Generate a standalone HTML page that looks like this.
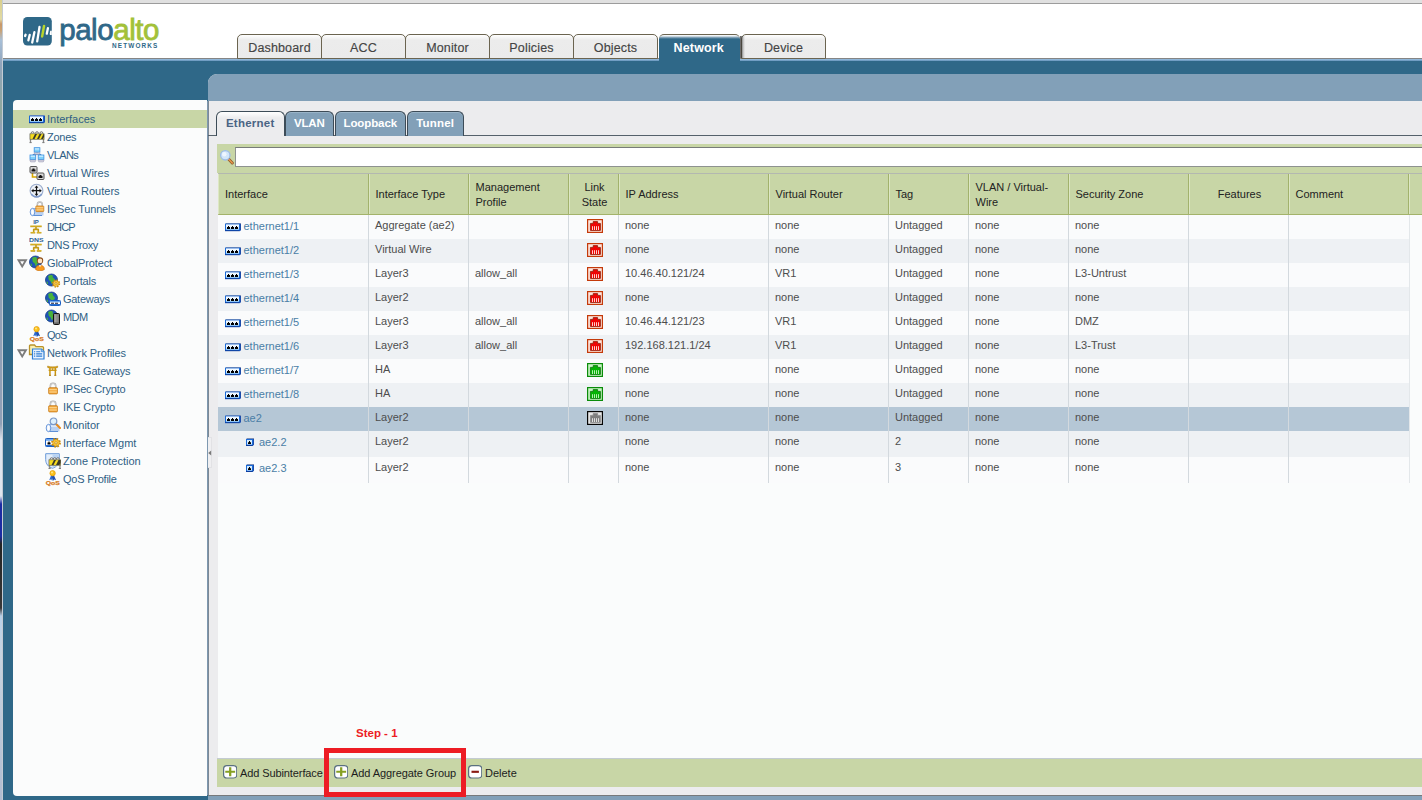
<!DOCTYPE html>
<html lang="en">
<head>
<meta charset="utf-8">
<title>Palo Alto Networks - Network - Interfaces</title>
<style>
*{box-sizing:border-box;margin:0;padding:0}
html,body{width:1422px;height:800px;overflow:hidden;background:#2f6888}
body{position:relative;font-family:"Liberation Sans",sans-serif;font-size:11px;color:#4a4a4a}
.abs{position:absolute}
#strip{left:0;top:0;width:3px;height:800px;border-right:1px solid #c3cbd4;background:linear-gradient(#d9cf8c 0,#e2daa4 2.4%,#c8986a 3%,#caa274 3.800%,#a8c0d8 5%,#90a4bc 8%,#8ea89c 14%,#8fa0b6 16%,#8fa0b6 53%,#dfe6ee 55%,#dfe6ee 62%,#1c2ca2 63%,#1c2ca2 67%,#242424 68%,#383838 76%,#b8d0e8 77%,#c8d4e0 82%,#b0bcd0 100%)}
#topbar{left:3px;top:0;width:1419px;height:4px;background:#e0e0e0;border-bottom:1px solid #9c9c9c}
#header{left:3px;top:4px;width:1419px;height:54px;background:#fff}
#hline{left:3px;top:58px;width:1419px;height:3px;background:linear-gradient(#858585 0,#858585 33%,#9cc2e4 34%,#6f9cc2 85%,#2f6888 100%)}
/* nav tabs */
.ntab{position:absolute;top:34px;height:25px;width:83.500px;border:1px solid #6b6450;border-bottom:1px solid #6b6450;border-radius:5px 5px 0 0;background:linear-gradient(#fff 0,#ececec 22%,#ebebeb 100%);text-align:center;font-size:12.5px;line-height:26px;color:#444;letter-spacing:.15px;-webkit-text-stroke:.15px #444}
.ntab.on{background:linear-gradient(#fff 0,#e6edf2 1px,#7fa0b6 2.500px,#2f6888 4px);color:#fff;font-weight:bold;border:0;border-top:1px solid #6b6450;height:27px;-webkit-text-stroke:0;letter-spacing:.15px;z-index:2}
/* panel */
#panel{left:208px;top:74px;width:1214px;height:721px;background:#ececee;border-radius:9px 0 0 0;overflow:hidden}
#ptitle{left:208px;top:74px;width:1214px;height:27px;background:#82a0b8;border-radius:9px 0 0 0}
#pleft{left:207px;top:101px;width:2px;height:694px;background:linear-gradient(to right,#7d9fbd,#7e8288)}
#phandle{left:208px;top:437px;width:4px;height:31px;background:#efeff1;border:1px solid #e2e2e5;border-left:0}
#pbot{left:208px;top:795px;width:1214px;height:5px;background:#82a0b8;border-top:1px solid #77797b}
#tabline{left:208px;top:134.500px;width:1214px;height:1px;background:#55616b}
.stab{position:absolute;top:111px;height:24.500px;border:1px solid #3d4c58;border-bottom:0;border-radius:6px 6px 0 0;background:#82a0b8;color:#fff;font-weight:bold;font-size:11.500px;line-height:22px;text-align:center;white-space:nowrap;box-shadow:inset 0 1px 0 #9ab4c8}
.stab.on{background:linear-gradient(#fff 0,#f6f6f7 3px,#ececee 6px);color:#4a6484;height:25px;box-shadow:none}
#sbar{left:217px;top:144px;width:1205px;height:29px;background:#c8d6a6}
#sinput{left:235px;top:147px;width:1190px;height:20px;background:#fff;border:1px solid #8e9290;border-top-color:#777b7a}
#ghead{left:217.500px;top:172.500px;width:1205px;height:42px;background:#c8d6a6;border-top:1px solid #b3b8b0;border-bottom:1px solid #a3b36a;border-left:1px solid #b9c49a}
.hc{position:absolute;top:173.500px;height:40.500px;border-left:1px solid #a2b26c;box-shadow:inset 1px 0 0 #dde7c4;color:#222;font-size:11px;line-height:15px;padding-left:7px;padding-top:1.500px;display:flex;align-items:center;white-space:nowrap}
.hc.ctr{justify-content:center;padding-left:3px;text-align:center}
#gbody{left:218px;top:214.500px;width:1204px;height:544px;background:#fafcfc}
.row{position:absolute;left:218px;width:1191.500px;height:24px}
.row.a{background:#fafbfc}.row.b{background:#eef1f4}.row.s{background:#b5c7d6}
.vl{position:absolute;top:214.500px;width:1px;height:268px;background:#d3d9de}
.c{position:absolute;height:24px;line-height:22px;white-space:nowrap;font-size:11px;color:#4d4d4d}
.lnk{color:#4a7ea6}
#bbar{left:217px;top:758px;width:1205px;height:29px;background:#c8d6a6;border-top:1px solid #c3cbd2}
.btxt{position:absolute;top:765px;height:16px;line-height:16px;font-size:11px;color:#1c1c1c;white-space:nowrap}
/* side */
#side{left:13px;top:100px;width:194px;height:696px;background:#fbfcfc;border-radius:4px 0 0 4px}
#side .sel{position:absolute;left:0;top:10px;width:194px;height:18px;background:#c8d6a6}
.ti{position:absolute;height:18px;line-height:18px;color:#2f5f85;white-space:nowrap;font-size:11px}
.ti svg{position:absolute;top:1px}
</style>
</head>
<body>
<div id="strip" class="abs"></div>
<div id="topbar" class="abs"></div>
<div id="header" class="abs"></div>
<div id="hline" class="abs"></div>

<!-- NAVTABS -->
<div class="ntab" style="left:237px;width:85px">Dashboard</div>
<div class="ntab" style="left:321px;width:85px">ACC</div>
<div class="ntab" style="left:405px;width:85px">Monitor</div>
<div class="ntab" style="left:489px;width:85px">Policies</div>
<div class="ntab" style="left:573px;width:85px">Objects</div>
<div class="ntab on" style="left:659px;width:81px;padding-right:1.500px">Network</div><div class="abs" style="left:740px;top:36px;width:5px;height:22px;z-index:3;background:linear-gradient(to right,rgba(40,40,40,.75),rgba(50,50,50,.5) 40%,rgba(60,60,60,.2) 70%,rgba(0,0,0,0))"></div>
<div class="ntab" style="left:741px;width:85px">Device</div>

<svg class="abs" style="left:23.150px;top:17.150px" width="29" height="29" viewBox="0 0 29 29"><rect x="0" y="0" width="28.800" height="28.400" rx="4.300" fill="#2f6888"/><g stroke="#fff" stroke-width="2.300" stroke-linecap="round"><path d="M2.600 17.700l-.5 1.300"/><path d="M6.750 17.900l-1.350 5.400"/><path d="M11.400 15.200l-2.200 10.300"/><path d="M16.500 10l-2.300 14.400"/><path d="M24.900 11.200l-1.100 5.500"/></g><path d="M21.050 8.900l-1.900 10.500" stroke="#b9d42c" stroke-width="2.500" stroke-linecap="round"/><path d="M27.300 13.700h1.500v4.300h-1.500a1 1 0 0 1-.6-1.200l.4-2.300a1 1 0 0 1 .2-.8z" fill="#fff"/></svg><div class="abs" id="logotxt" style="left:59.200px;top:9.700px;height:40px;line-height:40px;font-size:29.500px;letter-spacing:-.45px;white-space:nowrap;color:#2f6888;-webkit-text-stroke:.8px #2f6888">palo<span style="color:#a3c139;-webkit-text-stroke:.8px #a3c139">alto</span></div><div class="abs" id="logonet" style="left:112px;top:40.500px;height:9px;line-height:9px;font-size:6.400px;letter-spacing:1.150px;white-space:nowrap;color:#2f6888;font-weight:bold">NETWORKS</div>

<div id="side" class="abs"><div class="sel"></div>
<div class="abs" style="left:16px;top:11px;width:16px;height:16px"><svg width="16" height="16" viewBox="0 0 16 16" style=""><path d="M1.200 4h14.800v1H0z" fill="#7f8fb4"/><path d="M14 5h2v6.300l-1.400 .9z" fill="#1c4caa"/><rect x=".5" y="5.200" width="14" height="6.300" fill="#e4f2fe" stroke="#1a6ad8" stroke-width="1"/><rect x="1" y="9.600" width="13" height="1.500" fill="#8cc4f6"/><rect x="1" y="5.600" width="13" height="1" fill="#fff"/><path d="M0 11.700h14.600" stroke="#0c3c9c" stroke-width="1"/><path d="M2 10v-2h1v-1h1v1h1v2z" fill="#000"/><path d="M6 10v-2h1v-1h1v1h1v2z" fill="#000"/><path d="M10 10v-2h1v-1h1v1h1v2z" fill="#000"/></svg></div><div class="ti" style="left:34px;top:10px">Interfaces</div>
<div class="abs" style="left:16px;top:29px;width:16px;height:16px"><svg width="16" height="16" viewBox="0 0 16 16" style=""><g transform="translate(0.5 1.8)"><path d="M1 3v8.500M14 3v8.500" stroke="#8a8a8a" stroke-width="1.300"/><path d="M0 11.800h2.200M12.8 11.800h2.200" stroke="#777" stroke-width="1"/><path d="M1.600 2.600a1.500 1.700 0 0 1 3 0M6.0 2.600a1.500 1.700 0 0 1 3 0M10.4 2.600a1.500 1.700 0 0 1 3 0" fill="#eee" stroke="#666" stroke-width=".9"/><rect x=".5" y="3" width="14" height="5.500" fill="#f6dc1e" stroke="#6b6b55" stroke-width=".7"/><path d="M3 8.300l2.500-5.100h2l-2.500 5.100zM7.500 8.300l2.500-5.100h2l-2.500 5.100zM11.5 8.300l2.500-5.100h.6v2.800l-1.100 2.300z" fill="#3a3a2a"/></g></svg></div><div class="ti" style="left:34px;top:28px;letter-spacing:-0.26px">Zones</div>
<div class="abs" style="left:16px;top:47px;width:16px;height:16px"><svg width="16" height="16" viewBox="0 0 16 16" style=""><path d="M8 5.500v2M4 9V7.500h8V9" fill="none" stroke="#4a78c0" stroke-width=".9"/><g transform="translate(4.8 0.3)"><rect x=".4" y=".4" width="5.700" height="4.400" fill="#7fd0fa" stroke="#3c8fe0" stroke-width=".8"/><rect x="1.100" y="1" width="4.300" height="1.300" fill="#c9ecff"/><path d="M.2 5.600h6.100l-.8 1.700H1z" fill="#dcdce6" stroke="#8c8ca8" stroke-width=".5"/></g><g transform="translate(0.6 7.6)"><rect x=".4" y=".4" width="5.700" height="4.400" fill="#7fd0fa" stroke="#3c8fe0" stroke-width=".8"/><rect x="1.100" y="1" width="4.300" height="1.300" fill="#c9ecff"/><path d="M.2 5.600h6.100l-.8 1.700H1z" fill="#dcdce6" stroke="#8c8ca8" stroke-width=".5"/></g><g transform="translate(8.8 7.6)"><rect x=".4" y=".4" width="5.700" height="4.400" fill="#7fd0fa" stroke="#3c8fe0" stroke-width=".8"/><rect x="1.100" y="1" width="4.300" height="1.300" fill="#c9ecff"/><path d="M.2 5.600h6.100l-.8 1.700H1z" fill="#dcdce6" stroke="#8c8ca8" stroke-width=".5"/></g></svg></div><div class="ti" style="left:34px;top:46px;letter-spacing:-0.6px">VLANs</div>
<div class="abs" style="left:16px;top:65px;width:16px;height:16px"><svg width="16" height="16" viewBox="0 0 16 16" style=""><path d="M3.500 8v4h5" fill="none" stroke="#d8a800" stroke-width="1.600"/><g transform="translate(0.5 1)"><rect x=".5" y=".5" width="7" height="6.500" rx="1" fill="#d8d8d8" stroke="#555" stroke-width="1"/><path d="M2 5.500v-2h1v-1h2v1h1v2z" fill="#111"/></g><g transform="translate(7.5 7.5)"><rect x=".5" y=".5" width="7" height="6.500" rx="1" fill="#d8d8d8" stroke="#555" stroke-width="1"/><path d="M2 5.500v-2h1v-1h2v1h1v2z" fill="#111"/></g></svg></div><div class="ti" style="left:34px;top:64px">Virtual Wires</div>
<div class="abs" style="left:16px;top:83px;width:16px;height:16px"><svg width="16" height="16" viewBox="0 0 16 16" style=""><circle cx="7.500" cy="7.700" r="6.400" fill="#eef2f8" stroke="#9aaccc" stroke-width="1.100"/><path d="M2.200 11a6.400 6.400 0 0 0 10.600 0" fill="none" stroke="#7f9acb" stroke-width="1.400"/><path d="M7.500 2.400l1.900 2.300H8.100v2.400h2.400V5.800l2.300 1.900l-2.300 1.900V8.300H8.100v2.400h1.300l-1.900 2.300l-1.900-2.300h1.300V8.300H4.500v1.300L2.200 7.700l2.300-1.900v1.300h2.400V4.700H5.600z" fill="#111"/></svg></div><div class="ti" style="left:34px;top:82px">Virtual Routers</div>
<div class="abs" style="left:16px;top:101px;width:16px;height:16px"><svg width="16" height="16" viewBox="0 0 16 16" style=""><path d="M3.500 7.500h11v7H3.500z" fill="#b9d1f2"/><path d="M3.500 7.500h9.500v2.500H3.500z" fill="#dbe8fa"/><path d="M3.500 14.500h9.500" stroke="#5e8fd6" stroke-width="1"/><path d="M3.500 7.500h9.500" stroke="#7aa5e2" stroke-width=".8"/><ellipse cx="3.500" cy="11" rx="2.300" ry="3.700" fill="#e9f1fc" stroke="#5e8fd6" stroke-width=".9"/><ellipse cx="3.500" cy="11" rx="1" ry="2.300" fill="#fff"/><g transform="translate(6.3 0.3) scale(0.82)"><path d="M2.500 6V3.800a3 3 0 0 1 6 0V6" fill="none" stroke="#a9a9a9" stroke-width="1.700"/><path d="M2.500 6V3.800a3 3 0 0 1 6 0V6" fill="none" stroke="#e8e8e8" stroke-width=".6"/><rect x=".6" y="5.600" width="9.800" height="7" rx="1" fill="#f3a63a" stroke="#c27614" stroke-width=".8"/><rect x="1.300" y="7.200" width="8.400" height="1.300" fill="#fbd48c"/><rect x="1.300" y="9.800" width="8.400" height="1.300" fill="#fbd48c"/></g></svg></div><div class="ti" style="left:34px;top:100px;letter-spacing:-0.18px">IPSec Tunnels</div>
<div class="abs" style="left:16px;top:119px;width:16px;height:16px"><svg width="16" height="16" viewBox="0 0 16 16" style=""><text x="7" y="4.900" text-anchor="middle" font-family="Liberation Sans,sans-serif" font-size="6" font-weight="bold" fill="#2a5f96">IP</text><g fill="none" stroke="#c39a14" stroke-width="1.600"><path d="M1.300 7.4h11.400"/><path d="M7 7.4v2.900M4.400 10.4h5.200M4.700 10.0v3.400M9.300 10.0v3.400"/><path d="M1.600 13.7h4.600M7.800 13.7h4.600"/></g><g fill="none" stroke="#f2d040" stroke-width=".5"><path d="M1.300 7.0h11.400M1.600 13.3h4.600M7.800 13.3h4.600"/></g></svg></div><div class="ti" style="left:34px;top:118px;letter-spacing:-0.85px">DHCP</div>
<div class="abs" style="left:16px;top:137px;width:16px;height:16px"><svg width="16" height="16" viewBox="0 0 16 16" style=""><text x="7.300" y="4.600" text-anchor="middle" font-family="Liberation Sans,sans-serif" font-size="6" font-weight="bold" fill="#2a5f96" textLength="14.500" lengthAdjust="spacingAndGlyphs">DNS</text><g fill="none" stroke="#c39a14" stroke-width="1.600"><path d="M1.300 7.6h11.400"/><path d="M7 7.6v2.900M4.400 10.6h5.200M4.700 10.2v3.400M9.300 10.2v3.400"/><path d="M1.600 13.899999999999999h4.600M7.800 13.899999999999999h4.600"/></g><g fill="none" stroke="#f2d040" stroke-width=".5"><path d="M1.300 7.199999999999999h11.400M1.600 13.5h4.600M7.800 13.5h4.600"/></g></svg></div><div class="ti" style="left:34px;top:136px;letter-spacing:-0.38px">DNS Proxy</div>
<div class="abs" style="left:3.700px;top:158.8px;width:11px;height:10px"><svg width="11" height="10" viewBox="0 0 11 10" style=""><path d="M1.500 1.200h7.400L5.200 7.400z" fill="#fff" stroke="#7c7c7c" stroke-width="1.900" stroke-linejoin="miter"/></svg></div><div class="abs" style="left:16px;top:155px;width:16px;height:16px"><svg width="16" height="16" viewBox="0 0 16 16" style=""><circle cx="6.5" cy="7" r="6" fill="#1f55b8" stroke="#123a86" stroke-width=".8"/><path d="M3 3.2c1.5-1.4 3.5-1.6 4.6-.8c.6.9-.3 1.6.6 2.4c1 .9 1.9 1.3 1.6 2.6c-.3 1.1-1.4 1-1.9 2c-.4.9-.2 1.7-1 1.6c-.9-.3-.6-1.7-1.2-2.6c-.6-.8-1.7-.8-2-1.9c-.3-1.100.1-2.300-.7-3.300z" fill="#49b23c"/><path d="M1.600 8.200c.8.300 1.300 1 1.400 1.900c.1.700-.2 1.100-.5 1.300c-.6-.9-.9-2-.9-3.200z" fill="#49b23c"/><circle cx="11" cy="5.400" r="3.200" fill="#8a4a12"/><circle cx="11" cy="5.900" r="2.300" fill="#fde3c4"/><path d="M6.600 14.500c0-3 1.800-4.300 4.400-4.300s4.400 1.300 4.400 4.300c-1 .9-2.600 1.300-4.400 1.300s-3.400-.4-4.400-1.300z" fill="#f79a1e" stroke="#c86a08" stroke-width=".6"/><path d="M9.700 10.300l1.300 1.700l1.300-1.700z" fill="#fff"/></svg></div><div class="ti" style="left:34px;top:154px;letter-spacing:-0.13px">GlobalProtect</div>
<div class="abs" style="left:32px;top:173px;width:16px;height:16px"><svg width="16" height="16" viewBox="0 0 16 16" style=""><circle cx="6.5" cy="7" r="6" fill="#1f55b8" stroke="#123a86" stroke-width=".8"/><path d="M3 3.2c1.5-1.4 3.5-1.6 4.6-.8c.6.9-.3 1.6.6 2.4c1 .9 1.9 1.3 1.6 2.6c-.3 1.1-1.4 1-1.9 2c-.4.9-.2 1.7-1 1.6c-.9-.3-.6-1.7-1.2-2.6c-.6-.8-1.7-.8-2-1.9c-.3-1.100.1-2.300-.7-3.300z" fill="#49b23c"/><path d="M1.600 8.200c.8.300 1.300 1 1.400 1.900c.1.700-.2 1.100-.5 1.300c-.6-.9-.9-2-.9-3.200z" fill="#49b23c"/><g transform="translate(11 10.5)"><circle r="3.354" fill="none" stroke="#c98a0c" stroke-width="1.638" stroke-dasharray="1.3829715900000001 1.25126001"/><circle r="2.886" fill="#f4b824" stroke="#c98a0c" stroke-width=".5"/><circle r="1.95" fill="none" stroke="#fbe07a" stroke-width=".7" stroke-dasharray=".8 .8"/><circle r="0.858" fill="#fff3c4" stroke="#a06a06" stroke-width=".4"/></g></svg></div><div class="ti" style="left:50px;top:172px;letter-spacing:-0.16px">Portals</div>
<div class="abs" style="left:32px;top:191px;width:16px;height:16px"><svg width="16" height="16" viewBox="0 0 16 16" style=""><circle cx="6.5" cy="7" r="6" fill="#1f55b8" stroke="#123a86" stroke-width=".8"/><path d="M3 3.2c1.5-1.4 3.5-1.6 4.6-.8c.6.9-.3 1.6.6 2.4c1 .9 1.9 1.3 1.6 2.6c-.3 1.1-1.4 1-1.9 2c-.4.9-.2 1.7-1 1.6c-.9-.3-.6-1.7-1.2-2.6c-.6-.8-1.7-.8-2-1.9c-.3-1.100.1-2.300-.7-3.300z" fill="#49b23c"/><path d="M1.600 8.200c.8.300 1.300 1 1.400 1.900c.1.700-.2 1.100-.5 1.300c-.6-.9-.9-2-.9-3.200z" fill="#49b23c"/><rect x="4.500" y="9.500" width="11" height="5" rx=".8" fill="#fff" stroke="#1a5fc4"/><rect x="5" y="10" width="10" height="1.300" fill="#6ea8ee"/><rect x="5" y="13" width="10" height="1" fill="#2a6fd0"/><path d="M6 12.800v-1h3v1zM10 12.800v-1h3v1z" fill="#223"/></svg></div><div class="ti" style="left:50px;top:190px;letter-spacing:-0.28px">Gateways</div>
<div class="abs" style="left:32px;top:209px;width:16px;height:16px"><svg width="16" height="16" viewBox="0 0 16 16" style=""><circle cx="6.5" cy="7" r="6" fill="#1f55b8" stroke="#123a86" stroke-width=".8"/><path d="M3 3.2c1.5-1.4 3.5-1.6 4.6-.8c.6.9-.3 1.6.6 2.4c1 .9 1.9 1.3 1.6 2.6c-.3 1.1-1.4 1-1.9 2c-.4.9-.2 1.7-1 1.6c-.9-.3-.6-1.7-1.2-2.6c-.6-.8-1.7-.8-2-1.9c-.3-1.100.1-2.300-.7-3.300z" fill="#49b23c"/><path d="M1.600 8.200c.8.300 1.300 1 1.400 1.900c.1.700-.2 1.100-.5 1.300c-.6-.9-.9-2-.9-3.200z" fill="#49b23c"/><rect x="8.500" y="4.500" width="6" height="11" rx="1" fill="#666" stroke="#111" stroke-width="1"/><rect x="9.300" y="5.300" width="4.400" height="8" fill="#8a8a8a"/><rect x="9.300" y="5.300" width="2" height="8" fill="#a0a0a0"/></svg></div><div class="ti" style="left:50px;top:208px;letter-spacing:-0.56px">MDM</div>
<div class="abs" style="left:16px;top:227px;width:16px;height:16px"><svg width="16" height="16" viewBox="0 0 16 16" style="overflow:visible"><g transform="translate(0 -1.600)"><path d="M6.200 5.500L4.200 10.800l2-.9l1 1.700l1.300-5.300z" fill="#2d6bd0"/><path d="M8.800 5.500l2.300 5.300l-2-.7l-1.100 1.500l-1-5.300z" fill="#1f4fb0"/><circle cx="7.600" cy="3.800" r="2.700" fill="#fbc21a" stroke="#e29a0c" stroke-width=".7"/><circle cx="7" cy="3.200" r="1" fill="#ffe68a"/></g><text x="7.800" y="13.800" text-anchor="middle" font-family="Liberation Sans,sans-serif" font-size="5.600" font-weight="bold" fill="#d87a1c" stroke="#d87a1c" stroke-width=".25" textLength="14" lengthAdjust="spacingAndGlyphs">QoS</text></svg></div><div class="ti" style="left:34px;top:226px;letter-spacing:-0.8px">QoS</div>
<div class="abs" style="left:3.700px;top:248.8px;width:11px;height:10px"><svg width="11" height="10" viewBox="0 0 11 10" style=""><path d="M1.500 1.200h7.400L5.200 7.400z" fill="#fff" stroke="#7c7c7c" stroke-width="1.900" stroke-linejoin="miter"/></svg></div><div class="abs" style="left:16px;top:245px;width:16px;height:16px"><svg width="16" height="16" viewBox="0 0 16 16" style="overflow:visible"><g transform="translate(0 -1.500)"><path d="M.5 2.500a1 1 0 0 1 1-1h4l1.500 1.700h6.500a1 1 0 0 1 1 1V11H.5z" fill="#fbf0b0" stroke="#b8922a" stroke-width="1.300"/><path d="M3.500 5.500h9l2.500 2.500v7.500H3.500z" fill="#eaf3fd" stroke="#2f7fd6" stroke-width="1.200"/><path d="M12.300 5.700v2.500h2.500" fill="#bcd8f6" stroke="#2f7fd6" stroke-width=".8"/><path d="M5 8.200h1.200M7.200 8.200h4M5 10.400h1.200M7.200 10.400h6M5 12.600h1.200M7.200 12.600h6" stroke="#2f7fd6" stroke-width="1.100"/></g></svg></div><div class="ti" style="left:34px;top:244px;letter-spacing:-0.07px">Network Profiles</div>
<div class="abs" style="left:32px;top:263px;width:16px;height:16px"><svg width="16" height="16" viewBox="0 0 16 16" style=""><g transform="translate(1.800 1.400) scale(.73)"><path d="M1 2.200c2.300.9 4.600 1.100 7 1.100s4.700-.2 7-1.100l-.3 2.300c-2.200.6-4.400.8-6.700.8s-4.500-.2-6.700-.8z" fill="#d9a41a" stroke="#a87608" stroke-width=".6"/><path d="M4.300 5v10M11.700 5v10" stroke="#c8930e" stroke-width="2"/><path d="M2.500 8h11" stroke="#c8930e" stroke-width="1.800"/><path d="M3 15h2.800M10.200 15h2.800" stroke="#a87608" stroke-width="1.300"/><path d="M8 5.200v2.500" stroke="#c8930e" stroke-width="1.500"/></g></svg></div><div class="ti" style="left:50px;top:262px;letter-spacing:-0.19px">IKE Gateways</div>
<div class="abs" style="left:32px;top:281px;width:16px;height:16px"><svg width="16" height="16" viewBox="0 0 16 16" style=""><g transform="translate(3.1 1.6) scale(0.9)"><path d="M2.500 6V3.800a3 3 0 0 1 6 0V6" fill="none" stroke="#a9a9a9" stroke-width="1.700"/><path d="M2.500 6V3.800a3 3 0 0 1 6 0V6" fill="none" stroke="#e8e8e8" stroke-width=".6"/><rect x=".6" y="5.600" width="9.800" height="7" rx="1" fill="#f3a63a" stroke="#c27614" stroke-width=".8"/><rect x="1.300" y="7.200" width="8.400" height="1.300" fill="#fbd48c"/><rect x="1.300" y="9.800" width="8.400" height="1.300" fill="#fbd48c"/></g></svg></div><div class="ti" style="left:50px;top:280px;letter-spacing:-0.2px">IPSec Crypto</div>
<div class="abs" style="left:32px;top:299px;width:16px;height:16px"><svg width="16" height="16" viewBox="0 0 16 16" style=""><g transform="translate(3.1 1.6) scale(0.9)"><path d="M2.500 6V3.800a3 3 0 0 1 6 0V6" fill="none" stroke="#a9a9a9" stroke-width="1.700"/><path d="M2.500 6V3.800a3 3 0 0 1 6 0V6" fill="none" stroke="#e8e8e8" stroke-width=".6"/><rect x=".6" y="5.600" width="9.800" height="7" rx="1" fill="#f3a63a" stroke="#c27614" stroke-width=".8"/><rect x="1.300" y="7.200" width="8.400" height="1.300" fill="#fbd48c"/><rect x="1.300" y="9.800" width="8.400" height="1.300" fill="#fbd48c"/></g></svg></div><div class="ti" style="left:50px;top:298px;letter-spacing:-0.11px">IKE Crypto</div>
<div class="abs" style="left:32px;top:317px;width:16px;height:16px"><svg width="16" height="16" viewBox="0 0 16 16" style=""><path d="M3.500 7.500h11v7H3.500z" fill="#b9d1f2"/><path d="M3.500 7.500h9.500v2.500H3.500z" fill="#dbe8fa"/><path d="M3.500 14.500h9.500" stroke="#5e8fd6" stroke-width="1"/><path d="M3.500 7.500h9.500" stroke="#7aa5e2" stroke-width=".8"/><ellipse cx="3.500" cy="11" rx="2.300" ry="3.700" fill="#e9f1fc" stroke="#5e8fd6" stroke-width=".9"/><ellipse cx="3.500" cy="11" rx="1" ry="2.300" fill="#fff"/><path d="M10.500 6.500l4.500 4.500" stroke="#e88a1a" stroke-width="2" stroke-linecap="round"/><circle cx="8.500" cy="4.300" r="3.300" fill="#d6ecfb" fill-opacity=".85" stroke="#7a98c8" stroke-width="1.200"/></svg></div><div class="ti" style="left:50px;top:316px">Monitor</div>
<div class="abs" style="left:32px;top:335px;width:16px;height:16px"><svg width="16" height="16" viewBox="0 0 16 16" style=""><rect x=".5" y="3.500" width="12" height="8" rx=".8" fill="#fff" stroke="#1a5fc4"/><rect x="1" y="4" width="11" height="1.800" fill="#6ea8ee"/><rect x="1" y="10" width="11" height="1.200" fill="#2a6fd0"/><path d="M2.5 9.5v-2h1v-1h1v1h1v2z" fill="#000"/><g transform="translate(11 7.8)"><circle r="3.9559999999999995" fill="none" stroke="#c98a0c" stroke-width="1.9319999999999997" stroke-dasharray="1.63119726 1.4758451399999997"/><circle r="3.404" fill="#f4b824" stroke="#c98a0c" stroke-width=".5"/><circle r="2.3" fill="none" stroke="#fbe07a" stroke-width=".7" stroke-dasharray=".8 .8"/><circle r="1.012" fill="#fff3c4" stroke="#a06a06" stroke-width=".4"/></g></svg></div><div class="ti" style="left:50px;top:334px">Interface Mgmt</div>
<div class="abs" style="left:32px;top:353px;width:16px;height:16px"><svg width="16" height="16" viewBox="0 0 16 16" style=""><path d="M.7.700h13.600v6c0 4.300-2.800 7.300-6.800 8.600C3.500 14 .7 11 .7 6.700z" fill="#e3eefb" stroke="#6c9ad8" stroke-width="1"/><path d="M7.500 1.200h6.300v5.500c0 3.800-2.600 6.700-6.300 8z" fill="#b9d3f3"/><g transform="translate(3.5 3.8)"><path d="M1 3v8.500M11.5 3v8.500" stroke="#8a8a8a" stroke-width="1.300"/><path d="M0 11.800h2.200M10.3 11.800h2.200" stroke="#777" stroke-width="1"/><path d="M1.600 2.600a1.500 1.700 0 0 1 3 0M4.75 2.600a1.500 1.700 0 0 1 3 0M7.9 2.600a1.500 1.700 0 0 1 3 0" fill="#eee" stroke="#666" stroke-width=".9"/><rect x=".5" y="3" width="11.5" height="5.500" fill="#f6dc1e" stroke="#6b6b55" stroke-width=".7"/><path d="M3 8.300l2.500-5.100h2l-2.500 5.100zM7.500 8.300l2.500-5.100h2l-2.500 5.100zM9.0 8.300l2.500-5.100h.6v2.800l-1.100 2.300z" fill="#3a3a2a"/></g></svg></div><div class="ti" style="left:50px;top:352px">Zone Protection</div>
<div class="abs" style="left:32px;top:371px;width:16px;height:16px"><svg width="16" height="16" viewBox="0 0 16 16" style="overflow:visible"><g transform="translate(0 -1.600)"><path d="M6.200 5.500L4.200 10.800l2-.9l1 1.700l1.300-5.300z" fill="#2d6bd0"/><path d="M8.800 5.500l2.300 5.300l-2-.7l-1.100 1.500l-1-5.300z" fill="#1f4fb0"/><circle cx="7.600" cy="3.800" r="2.700" fill="#fbc21a" stroke="#e29a0c" stroke-width=".7"/><circle cx="7" cy="3.200" r="1" fill="#ffe68a"/></g><text x="7.800" y="13.800" text-anchor="middle" font-family="Liberation Sans,sans-serif" font-size="5.600" font-weight="bold" fill="#d87a1c" stroke="#d87a1c" stroke-width=".25" textLength="14" lengthAdjust="spacingAndGlyphs">QoS</text></svg></div><div class="ti" style="left:50px;top:370px;letter-spacing:-0.23px">QoS Profile</div>
</div>

<div id="panel" class="abs"></div><div id="ptitle" class="abs"></div><div id="pleft" class="abs"></div><div id="phandle" class="abs"></div><svg class="abs" style="left:208px;top:449.500px" width="4" height="6" viewBox="0 0 4 6"><path d="M.2 3L3.200 .4v5.200z" fill="#7a7a7a"/></svg><div id="pbot" class="abs"></div>
<div id="tabline" class="abs"></div>
<div class="stab on" style="left:216px;width:68.5px;letter-spacing:0.25px">Ethernet</div><div class="stab" style="left:284.5px;width:49.5px;letter-spacing:-0.2px">VLAN</div><div class="stab" style="left:335px;width:70.5px;letter-spacing:-0.1px">Loopback</div><div class="stab" style="left:407px;width:56.5px;letter-spacing:0.2px">Tunnel</div>
<div id="sbar" class="abs"></div><div id="sinput" class="abs"></div>
<svg class="abs" style="left:219px;top:149px" width="16" height="16" viewBox="0 0 16 16"><path d="M9.300 9.800l4 4.200" stroke="#8a5a2a" stroke-width="3" stroke-linecap="round"/><path d="M9.300 9.800l4 4.200" stroke="#e8954a" stroke-width="1.600" stroke-linecap="round"/><circle cx="6.300" cy="6.300" r="4.700" fill="#d2e6fa" stroke="#9dbde6" stroke-width="1.300"/><circle cx="5.300" cy="5.200" r="2.200" fill="#eef6ff"/></svg>
<div id="ghead" class="abs"></div><div id="gbody" class="abs"></div>
<div class="hc" style="left:217px;width:150.5px;border-left-color:transparent"><span>Interface</span></div><div class="hc" style="left:367.5px;width:100.0px"><span>Interface Type</span></div><div class="hc" style="left:467.5px;width:100.0px"><span>Management<br>Profile</span></div><div class="hc ctr" style="left:567.5px;width:50.0px"><span>Link<br>State</span></div><div class="hc" style="left:617.5px;width:150.0px"><span>IP Address</span></div><div class="hc" style="left:767.5px;width:120.0px"><span>Virtual Router</span></div><div class="hc" style="left:887.5px;width:80.0px"><span>Tag</span></div><div class="hc" style="left:967.5px;width:100.0px"><span>VLAN / Virtual-<br>Wire</span></div><div class="hc" style="left:1067.5px;width:120.0px"><span>Security Zone</span></div><div class="hc ctr" style="left:1187.5px;width:100.0px"><span>Features</span></div><div class="hc" style="left:1287.5px;width:120.0px"><span>Comment</span></div><div class="hc" style="left:1407.5px;width:14.5px"><span></span></div>
<div class="row a" style="top:214.5px;height:24px"></div><div class="abs" style="left:225px;top:219.0px;width:16px;height:16px"><svg width="16" height="16" viewBox="0 0 16 16" style=""><path d="M1.200 4h14.800v1H0z" fill="#7f8fb4"/><path d="M14 5h2v6.300l-1.400 .9z" fill="#1c4caa"/><rect x=".5" y="5.200" width="14" height="6.300" fill="#e4f2fe" stroke="#1a6ad8" stroke-width="1"/><rect x="1" y="9.600" width="13" height="1.500" fill="#8cc4f6"/><rect x="1" y="5.600" width="13" height="1" fill="#fff"/><path d="M0 11.700h14.600" stroke="#0c3c9c" stroke-width="1"/><path d="M2 10v-2h1v-1h1v1h1v2z" fill="#000"/><path d="M6 10v-2h1v-1h1v1h1v2z" fill="#000"/><path d="M10 10v-2h1v-1h1v1h1v2z" fill="#000"/></svg></div><div class="c lnk" style="left:243.500px;top:214.5px">ethernet1/1</div><div class="c" style="left:375.0px;top:213.5px">Aggregate (ae2)</div><div class="c" style="left:625.0px;top:213.5px">none</div><div class="c" style="left:775.0px;top:213.5px">none</div><div class="c" style="left:895.0px;top:213.5px">Untagged</div><div class="c" style="left:975.0px;top:213.5px">none</div><div class="c" style="left:1075.0px;top:213.5px">none</div><div class="abs" style="left:587px;top:219.0px;width:16px;height:14px"><svg width="16" height="14" viewBox="0 0 16 14"><rect x=".6" y=".6" width="14.800" height="12.800" fill="#ffe6de" stroke="#c43a0a" stroke-width="1.200"/><path d="M3.400 11.400V4.400h2.800V2.600h4.400v1.800h2.800v7z" fill="#f00404" stroke="#8a1c04" stroke-width=".8" stroke-linejoin="miter"/><path d="M5.500 11V7.200M7.500 11V7.200M9.500 11V7.200M11.500 11V7.200" stroke="#ffe6de" stroke-width=".9"/></svg></div>
<div class="row b" style="top:238.5px;height:24px"></div><div class="abs" style="left:225px;top:243.0px;width:16px;height:16px"><svg width="16" height="16" viewBox="0 0 16 16" style=""><path d="M1.200 4h14.800v1H0z" fill="#7f8fb4"/><path d="M14 5h2v6.300l-1.400 .9z" fill="#1c4caa"/><rect x=".5" y="5.200" width="14" height="6.300" fill="#e4f2fe" stroke="#1a6ad8" stroke-width="1"/><rect x="1" y="9.600" width="13" height="1.500" fill="#8cc4f6"/><rect x="1" y="5.600" width="13" height="1" fill="#fff"/><path d="M0 11.700h14.600" stroke="#0c3c9c" stroke-width="1"/><path d="M2 10v-2h1v-1h1v1h1v2z" fill="#000"/><path d="M6 10v-2h1v-1h1v1h1v2z" fill="#000"/><path d="M10 10v-2h1v-1h1v1h1v2z" fill="#000"/></svg></div><div class="c lnk" style="left:243.500px;top:238.5px">ethernet1/2</div><div class="c" style="left:375.0px;top:237.5px">Virtual Wire</div><div class="c" style="left:625.0px;top:237.5px">none</div><div class="c" style="left:775.0px;top:237.5px">none</div><div class="c" style="left:895.0px;top:237.5px">Untagged</div><div class="c" style="left:975.0px;top:237.5px">none</div><div class="c" style="left:1075.0px;top:237.5px">none</div><div class="abs" style="left:587px;top:243.0px;width:16px;height:14px"><svg width="16" height="14" viewBox="0 0 16 14"><rect x=".6" y=".6" width="14.800" height="12.800" fill="#ffe6de" stroke="#c43a0a" stroke-width="1.200"/><path d="M3.400 11.400V4.400h2.800V2.600h4.400v1.800h2.800v7z" fill="#f00404" stroke="#8a1c04" stroke-width=".8" stroke-linejoin="miter"/><path d="M5.500 11V7.200M7.500 11V7.200M9.500 11V7.200M11.500 11V7.200" stroke="#ffe6de" stroke-width=".9"/></svg></div>
<div class="row a" style="top:262.5px;height:24px"></div><div class="abs" style="left:225px;top:267.0px;width:16px;height:16px"><svg width="16" height="16" viewBox="0 0 16 16" style=""><path d="M1.200 4h14.800v1H0z" fill="#7f8fb4"/><path d="M14 5h2v6.300l-1.400 .9z" fill="#1c4caa"/><rect x=".5" y="5.200" width="14" height="6.300" fill="#e4f2fe" stroke="#1a6ad8" stroke-width="1"/><rect x="1" y="9.600" width="13" height="1.500" fill="#8cc4f6"/><rect x="1" y="5.600" width="13" height="1" fill="#fff"/><path d="M0 11.700h14.600" stroke="#0c3c9c" stroke-width="1"/><path d="M2 10v-2h1v-1h1v1h1v2z" fill="#000"/><path d="M6 10v-2h1v-1h1v1h1v2z" fill="#000"/><path d="M10 10v-2h1v-1h1v1h1v2z" fill="#000"/></svg></div><div class="c lnk" style="left:243.500px;top:262.5px">ethernet1/3</div><div class="c" style="left:375.0px;top:261.5px">Layer3</div><div class="c" style="left:475.0px;top:261.5px">allow_all</div><div class="c" style="left:625.0px;top:261.5px">10.46.40.121/24</div><div class="c" style="left:775.0px;top:261.5px">VR1</div><div class="c" style="left:895.0px;top:261.5px">Untagged</div><div class="c" style="left:975.0px;top:261.5px">none</div><div class="c" style="left:1075.0px;top:261.5px">L3-Untrust</div><div class="abs" style="left:587px;top:267.0px;width:16px;height:14px"><svg width="16" height="14" viewBox="0 0 16 14"><rect x=".6" y=".6" width="14.800" height="12.800" fill="#ffe6de" stroke="#c43a0a" stroke-width="1.200"/><path d="M3.400 11.400V4.400h2.800V2.600h4.400v1.800h2.800v7z" fill="#f00404" stroke="#8a1c04" stroke-width=".8" stroke-linejoin="miter"/><path d="M5.500 11V7.200M7.500 11V7.200M9.500 11V7.200M11.500 11V7.200" stroke="#ffe6de" stroke-width=".9"/></svg></div>
<div class="row b" style="top:286.5px;height:24px"></div><div class="abs" style="left:225px;top:291.0px;width:16px;height:16px"><svg width="16" height="16" viewBox="0 0 16 16" style=""><path d="M1.200 4h14.800v1H0z" fill="#7f8fb4"/><path d="M14 5h2v6.300l-1.400 .9z" fill="#1c4caa"/><rect x=".5" y="5.200" width="14" height="6.300" fill="#e4f2fe" stroke="#1a6ad8" stroke-width="1"/><rect x="1" y="9.600" width="13" height="1.500" fill="#8cc4f6"/><rect x="1" y="5.600" width="13" height="1" fill="#fff"/><path d="M0 11.700h14.600" stroke="#0c3c9c" stroke-width="1"/><path d="M2 10v-2h1v-1h1v1h1v2z" fill="#000"/><path d="M6 10v-2h1v-1h1v1h1v2z" fill="#000"/><path d="M10 10v-2h1v-1h1v1h1v2z" fill="#000"/></svg></div><div class="c lnk" style="left:243.500px;top:286.5px">ethernet1/4</div><div class="c" style="left:375.0px;top:285.5px">Layer2</div><div class="c" style="left:625.0px;top:285.5px">none</div><div class="c" style="left:775.0px;top:285.5px">none</div><div class="c" style="left:895.0px;top:285.5px">Untagged</div><div class="c" style="left:975.0px;top:285.5px">none</div><div class="c" style="left:1075.0px;top:285.5px">none</div><div class="abs" style="left:587px;top:291.0px;width:16px;height:14px"><svg width="16" height="14" viewBox="0 0 16 14"><rect x=".6" y=".6" width="14.800" height="12.800" fill="#ffe6de" stroke="#c43a0a" stroke-width="1.200"/><path d="M3.400 11.400V4.400h2.800V2.600h4.400v1.800h2.800v7z" fill="#f00404" stroke="#8a1c04" stroke-width=".8" stroke-linejoin="miter"/><path d="M5.500 11V7.200M7.500 11V7.200M9.500 11V7.200M11.500 11V7.200" stroke="#ffe6de" stroke-width=".9"/></svg></div>
<div class="row a" style="top:310.5px;height:24px"></div><div class="abs" style="left:225px;top:315.0px;width:16px;height:16px"><svg width="16" height="16" viewBox="0 0 16 16" style=""><path d="M1.200 4h14.800v1H0z" fill="#7f8fb4"/><path d="M14 5h2v6.300l-1.400 .9z" fill="#1c4caa"/><rect x=".5" y="5.200" width="14" height="6.300" fill="#e4f2fe" stroke="#1a6ad8" stroke-width="1"/><rect x="1" y="9.600" width="13" height="1.500" fill="#8cc4f6"/><rect x="1" y="5.600" width="13" height="1" fill="#fff"/><path d="M0 11.700h14.600" stroke="#0c3c9c" stroke-width="1"/><path d="M2 10v-2h1v-1h1v1h1v2z" fill="#000"/><path d="M6 10v-2h1v-1h1v1h1v2z" fill="#000"/><path d="M10 10v-2h1v-1h1v1h1v2z" fill="#000"/></svg></div><div class="c lnk" style="left:243.500px;top:310.5px">ethernet1/5</div><div class="c" style="left:375.0px;top:309.5px">Layer3</div><div class="c" style="left:475.0px;top:309.5px">allow_all</div><div class="c" style="left:625.0px;top:309.5px">10.46.44.121/23</div><div class="c" style="left:775.0px;top:309.5px">VR1</div><div class="c" style="left:895.0px;top:309.5px">Untagged</div><div class="c" style="left:975.0px;top:309.5px">none</div><div class="c" style="left:1075.0px;top:309.5px">DMZ</div><div class="abs" style="left:587px;top:315.0px;width:16px;height:14px"><svg width="16" height="14" viewBox="0 0 16 14"><rect x=".6" y=".6" width="14.800" height="12.800" fill="#ffe6de" stroke="#c43a0a" stroke-width="1.200"/><path d="M3.400 11.400V4.400h2.800V2.600h4.400v1.800h2.800v7z" fill="#f00404" stroke="#8a1c04" stroke-width=".8" stroke-linejoin="miter"/><path d="M5.500 11V7.200M7.500 11V7.200M9.500 11V7.200M11.500 11V7.200" stroke="#ffe6de" stroke-width=".9"/></svg></div>
<div class="row b" style="top:334.5px;height:24px"></div><div class="abs" style="left:225px;top:339.0px;width:16px;height:16px"><svg width="16" height="16" viewBox="0 0 16 16" style=""><path d="M1.200 4h14.800v1H0z" fill="#7f8fb4"/><path d="M14 5h2v6.300l-1.400 .9z" fill="#1c4caa"/><rect x=".5" y="5.200" width="14" height="6.300" fill="#e4f2fe" stroke="#1a6ad8" stroke-width="1"/><rect x="1" y="9.600" width="13" height="1.500" fill="#8cc4f6"/><rect x="1" y="5.600" width="13" height="1" fill="#fff"/><path d="M0 11.700h14.600" stroke="#0c3c9c" stroke-width="1"/><path d="M2 10v-2h1v-1h1v1h1v2z" fill="#000"/><path d="M6 10v-2h1v-1h1v1h1v2z" fill="#000"/><path d="M10 10v-2h1v-1h1v1h1v2z" fill="#000"/></svg></div><div class="c lnk" style="left:243.500px;top:334.5px">ethernet1/6</div><div class="c" style="left:375.0px;top:333.5px">Layer3</div><div class="c" style="left:475.0px;top:333.5px">allow_all</div><div class="c" style="left:625.0px;top:333.5px">192.168.121.1/24</div><div class="c" style="left:775.0px;top:333.5px">VR1</div><div class="c" style="left:895.0px;top:333.5px">Untagged</div><div class="c" style="left:975.0px;top:333.5px">none</div><div class="c" style="left:1075.0px;top:333.5px">L3-Trust</div><div class="abs" style="left:587px;top:339.0px;width:16px;height:14px"><svg width="16" height="14" viewBox="0 0 16 14"><rect x=".6" y=".6" width="14.800" height="12.800" fill="#ffe6de" stroke="#c43a0a" stroke-width="1.200"/><path d="M3.400 11.400V4.400h2.800V2.600h4.400v1.800h2.800v7z" fill="#f00404" stroke="#8a1c04" stroke-width=".8" stroke-linejoin="miter"/><path d="M5.500 11V7.200M7.500 11V7.200M9.500 11V7.200M11.500 11V7.200" stroke="#ffe6de" stroke-width=".9"/></svg></div>
<div class="row a" style="top:358.5px;height:24px"></div><div class="abs" style="left:225px;top:363.0px;width:16px;height:16px"><svg width="16" height="16" viewBox="0 0 16 16" style=""><path d="M1.200 4h14.800v1H0z" fill="#7f8fb4"/><path d="M14 5h2v6.300l-1.400 .9z" fill="#1c4caa"/><rect x=".5" y="5.200" width="14" height="6.300" fill="#e4f2fe" stroke="#1a6ad8" stroke-width="1"/><rect x="1" y="9.600" width="13" height="1.500" fill="#8cc4f6"/><rect x="1" y="5.600" width="13" height="1" fill="#fff"/><path d="M0 11.700h14.600" stroke="#0c3c9c" stroke-width="1"/><path d="M2 10v-2h1v-1h1v1h1v2z" fill="#000"/><path d="M6 10v-2h1v-1h1v1h1v2z" fill="#000"/><path d="M10 10v-2h1v-1h1v1h1v2z" fill="#000"/></svg></div><div class="c lnk" style="left:243.500px;top:358.5px">ethernet1/7</div><div class="c" style="left:375.0px;top:357.5px">HA</div><div class="c" style="left:625.0px;top:357.5px">none</div><div class="c" style="left:775.0px;top:357.5px">none</div><div class="c" style="left:895.0px;top:357.5px">Untagged</div><div class="c" style="left:975.0px;top:357.5px">none</div><div class="c" style="left:1075.0px;top:357.5px">none</div><div class="abs" style="left:587px;top:363.0px;width:16px;height:14px"><svg width="16" height="14" viewBox="0 0 16 14"><rect x=".6" y=".6" width="14.800" height="12.800" fill="#c8f4c4" stroke="#0a8c0a" stroke-width="1.200"/><path d="M3.400 11.400V4.400h2.800V2.600h4.400v1.800h2.800v7z" fill="#04b404" stroke="#0a6e0a" stroke-width=".8" stroke-linejoin="miter"/><path d="M5.500 11V7.200M7.500 11V7.200M9.500 11V7.200M11.500 11V7.200" stroke="#c8f4c4" stroke-width=".9"/></svg></div>
<div class="row b" style="top:382.5px;height:24px"></div><div class="abs" style="left:225px;top:387.0px;width:16px;height:16px"><svg width="16" height="16" viewBox="0 0 16 16" style=""><path d="M1.200 4h14.800v1H0z" fill="#7f8fb4"/><path d="M14 5h2v6.300l-1.400 .9z" fill="#1c4caa"/><rect x=".5" y="5.200" width="14" height="6.300" fill="#e4f2fe" stroke="#1a6ad8" stroke-width="1"/><rect x="1" y="9.600" width="13" height="1.500" fill="#8cc4f6"/><rect x="1" y="5.600" width="13" height="1" fill="#fff"/><path d="M0 11.700h14.600" stroke="#0c3c9c" stroke-width="1"/><path d="M2 10v-2h1v-1h1v1h1v2z" fill="#000"/><path d="M6 10v-2h1v-1h1v1h1v2z" fill="#000"/><path d="M10 10v-2h1v-1h1v1h1v2z" fill="#000"/></svg></div><div class="c lnk" style="left:243.500px;top:382.5px">ethernet1/8</div><div class="c" style="left:375.0px;top:381.5px">HA</div><div class="c" style="left:625.0px;top:381.5px">none</div><div class="c" style="left:775.0px;top:381.5px">none</div><div class="c" style="left:895.0px;top:381.5px">Untagged</div><div class="c" style="left:975.0px;top:381.5px">none</div><div class="c" style="left:1075.0px;top:381.5px">none</div><div class="abs" style="left:587px;top:387.0px;width:16px;height:14px"><svg width="16" height="14" viewBox="0 0 16 14"><rect x=".6" y=".6" width="14.800" height="12.800" fill="#c8f4c4" stroke="#0a8c0a" stroke-width="1.200"/><path d="M3.400 11.400V4.400h2.800V2.600h4.400v1.800h2.800v7z" fill="#04b404" stroke="#0a6e0a" stroke-width=".8" stroke-linejoin="miter"/><path d="M5.500 11V7.200M7.500 11V7.200M9.500 11V7.200M11.500 11V7.200" stroke="#c8f4c4" stroke-width=".9"/></svg></div>
<div class="row s" style="top:406.5px;height:24px"></div><div class="abs" style="left:225px;top:411.0px;width:16px;height:16px"><svg width="16" height="16" viewBox="0 0 16 16" style=""><path d="M1.200 4h14.800v1H0z" fill="#7f8fb4"/><path d="M14 5h2v6.300l-1.400 .9z" fill="#1c4caa"/><rect x=".5" y="5.200" width="14" height="6.300" fill="#e4f2fe" stroke="#1a6ad8" stroke-width="1"/><rect x="1" y="9.600" width="13" height="1.500" fill="#8cc4f6"/><rect x="1" y="5.600" width="13" height="1" fill="#fff"/><path d="M0 11.700h14.600" stroke="#0c3c9c" stroke-width="1"/><path d="M2 10v-2h1v-1h1v1h1v2z" fill="#000"/><path d="M6 10v-2h1v-1h1v1h1v2z" fill="#000"/><path d="M10 10v-2h1v-1h1v1h1v2z" fill="#000"/></svg></div><div class="c lnk" style="left:243.500px;top:406.5px">ae2</div><div class="c" style="left:375.0px;top:405.5px">Layer2</div><div class="c" style="left:625.0px;top:405.5px">none</div><div class="c" style="left:775.0px;top:405.5px">none</div><div class="c" style="left:895.0px;top:405.5px">Untagged</div><div class="c" style="left:975.0px;top:405.5px">none</div><div class="c" style="left:1075.0px;top:405.5px">none</div><div class="abs" style="left:587px;top:411.0px;width:16px;height:14px"><svg width="16" height="14" viewBox="0 0 16 14"><rect x=".6" y=".6" width="14.800" height="12.800" fill="#eaeaea" stroke="#050505" stroke-width="1.200"/><path d="M3.400 11.400V4.400h2.800V2.600h4.400v1.800h2.800v7z" fill="#7e7e7e" stroke="#8c8c8c" stroke-width=".8" stroke-linejoin="miter"/><path d="M5.500 11V7.200M7.500 11V7.200M9.500 11V7.200M11.500 11V7.200" stroke="#eaeaea" stroke-width=".9"/></svg></div>
<div class="row b" style="top:430.5px;height:26px"></div><svg class="abs" style="left:246px;top:438.0px" width="8" height="8" viewBox="0 0 8 8"><path d="M1.200 0h6.800v1H0z" fill="#7f8fb4"/><path d="M6.600 1h1.400v5.800l-1.400 1.200z" fill="#1c4caa"/><rect x=".5" y="1.500" width="6" height="5.600" fill="#d4ebfd" stroke="#1a6ad8" stroke-width="1"/><path d="M0 7.500h6.800" stroke="#0c3c9c" stroke-width="1"/><path d="M2 5.900v-1.700h1v-1.200h1v1.200h1v1.700z" fill="#000"/></svg><div class="c lnk" style="left:259px;top:430.5px">ae2.2</div><div class="c" style="left:375.0px;top:429.5px">Layer2</div><div class="c" style="left:625.0px;top:429.5px">none</div><div class="c" style="left:775.0px;top:429.5px">none</div><div class="c" style="left:895.0px;top:429.5px">2</div><div class="c" style="left:975.0px;top:429.5px">none</div><div class="c" style="left:1075.0px;top:429.5px">none</div>
<div class="row a" style="top:456.5px;height:26px"></div><svg class="abs" style="left:246px;top:464.0px" width="8" height="8" viewBox="0 0 8 8"><path d="M1.200 0h6.800v1H0z" fill="#7f8fb4"/><path d="M6.600 1h1.400v5.800l-1.400 1.200z" fill="#1c4caa"/><rect x=".5" y="1.500" width="6" height="5.600" fill="#d4ebfd" stroke="#1a6ad8" stroke-width="1"/><path d="M0 7.500h6.800" stroke="#0c3c9c" stroke-width="1"/><path d="M2 5.900v-1.700h1v-1.200h1v1.200h1v1.700z" fill="#000"/></svg><div class="c lnk" style="left:259px;top:456.5px">ae2.3</div><div class="c" style="left:375.0px;top:455.5px">Layer2</div><div class="c" style="left:625.0px;top:455.5px">none</div><div class="c" style="left:775.0px;top:455.5px">none</div><div class="c" style="left:895.0px;top:455.5px">3</div><div class="c" style="left:975.0px;top:455.5px">none</div><div class="c" style="left:1075.0px;top:455.5px">none</div>
<div class="vl" style="left:368.0px"></div><div class="vl" style="left:468.0px"></div><div class="vl" style="left:568.0px"></div><div class="vl" style="left:618.0px"></div><div class="vl" style="left:768.0px"></div><div class="vl" style="left:888.0px"></div><div class="vl" style="left:968.0px"></div><div class="vl" style="left:1068.0px"></div><div class="vl" style="left:1188.0px"></div><div class="vl" style="left:1288.0px"></div><div class="vl" style="left:1409px;background:#e3e7ea"></div>
<div id="bbar" class="abs"></div>
<svg class="abs" style="left:222.8px;top:765.200px" width="14.400" height="13.600" viewBox="0 0 14 14" preserveAspectRatio="none"><rect x=".6" y=".6" width="12.800" height="12.800" rx="3.200" fill="#fff" stroke="#5a7080" stroke-width="1.200"/><path d="M7 2.300v9.400M2.200 7h9.600" stroke="#86a022" stroke-width="2.200"/></svg><div class="btxt" style="left:240px;letter-spacing:-.1px">Add Subinterface</div><svg class="abs" style="left:333.7px;top:765.200px" width="14.400" height="13.600" viewBox="0 0 14 14" preserveAspectRatio="none"><rect x=".6" y=".6" width="12.800" height="12.800" rx="3.200" fill="#fff" stroke="#5a7080" stroke-width="1.200"/><path d="M7 2.300v9.400M2.200 7h9.600" stroke="#86a022" stroke-width="2.200"/></svg><div class="btxt" style="left:351px;letter-spacing:-.07px">Add Aggregate Group</div><svg class="abs" style="left:467.6px;top:765.200px" width="14.400" height="13.600" viewBox="0 0 14 14" preserveAspectRatio="none"><rect x=".6" y=".6" width="12.800" height="12.800" rx="3.200" fill="#fff" stroke="#5a7080" stroke-width="1.200"/><path d="M3.400 7h7.200" stroke="#8a1a12" stroke-width="2.200"/></svg><div class="btxt" style="left:485px">Delete</div>


<div class="abs" style="left:324px;top:748px;width:142px;height:49px;border:5px solid #ed1c24"></div><div class="abs" style="left:356px;top:725px;font-weight:bold;font-size:11.500px;line-height:16px;color:#ed1c24;white-space:nowrap">Step - 1</div>
</body>
</html>
